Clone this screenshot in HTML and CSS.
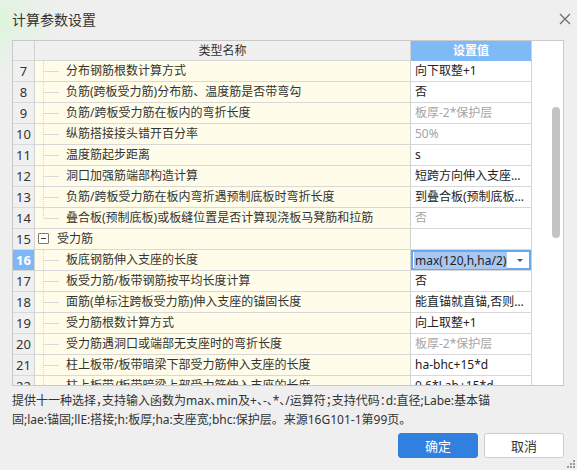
FILE: index.html
```html
<!DOCTYPE html>
<html lang="zh-CN">
<head>
<meta charset="utf-8">
<title>计算参数设置</title>
<link rel="stylesheet" href="styles.css">
</head>
<body>
<div class="dialog">
  <div class="titlebar">
    <span class="title">计算参数设置</span>
    <svg class="close" width="12" height="12" viewBox="0 0 12 12"><path d="M1 1 L11 11 M11 1 L1 11" stroke="#6a6a6a" stroke-width="1.2" fill="none"/></svg>
  </div>
  <div class="table">
    <div class="grid">
      <div class="row head">
        <div class="c-num"></div>
        <div class="c-name">类型名称</div>
        <div class="c-val">设置值</div>
      </div>
      <div class="row"><div class="c-num">7</div><div class="c-name"><i class="tree"></i><span class="txt">分布钢筋根数计算方式</span></div><div class="c-val">向下取整+1</div></div>
      <div class="row"><div class="c-num">8</div><div class="c-name"><i class="tree"></i><span class="txt">负筋(跨板受力筋)分布筋、温度筋是否带弯勾</span></div><div class="c-val">否</div></div>
      <div class="row"><div class="c-num">9</div><div class="c-name"><i class="tree"></i><span class="txt">负筋/跨板受力筋在板内的弯折长度</span></div><div class="c-val dim">板厚-2*保护层</div></div>
      <div class="row"><div class="c-num">10</div><div class="c-name"><i class="tree"></i><span class="txt">纵筋搭接接头错开百分率</span></div><div class="c-val dim">50%</div></div>
      <div class="row"><div class="c-num">11</div><div class="c-name"><i class="tree"></i><span class="txt">温度筋起步距离</span></div><div class="c-val">s</div></div>
      <div class="row"><div class="c-num">12</div><div class="c-name"><i class="tree"></i><span class="txt">洞口加强筋端部构造计算</span></div><div class="c-val">短跨方向伸入支座底筋长度</div></div>
      <div class="row"><div class="c-num">13</div><div class="c-name"><i class="tree"></i><span class="txt">负筋/跨板受力筋在板内弯折遇预制底板时弯折长度</span></div><div class="c-val">到叠合板(预制底板)顶</div></div>
      <div class="row"><div class="c-num">14</div><div class="c-name"><i class="tree last"></i><span class="txt">叠合板(预制底板)或板缝位置是否计算现浇板马凳筋和拉筋</span></div><div class="c-val dim">否</div></div>
      <div class="row"><div class="c-num">15</div><div class="c-name group"><i class="toggle"></i><span class="txt">受力筋</span></div><div class="c-val"></div></div>
      <div class="row sel"><div class="c-num">16</div><div class="c-name"><i class="tree"></i><span class="txt">板底钢筋伸入支座的长度</span></div><div class="c-val combo"><span class="hl">max(120,h,ha/2)</span><i class="arrow"></i></div></div>
      <div class="row"><div class="c-num">17</div><div class="c-name"><i class="tree"></i><span class="txt">板受力筋/板带钢筋按平均长度计算</span></div><div class="c-val">否</div></div>
      <div class="row"><div class="c-num">18</div><div class="c-name"><i class="tree"></i><span class="txt">面筋(单标注跨板受力筋)伸入支座的锚固长度</span></div><div class="c-val">能直锚就直锚,否则按公式计算</div></div>
      <div class="row"><div class="c-num">19</div><div class="c-name"><i class="tree"></i><span class="txt">受力筋根数计算方式</span></div><div class="c-val">向上取整+1</div></div>
      <div class="row"><div class="c-num">20</div><div class="c-name"><i class="tree"></i><span class="txt">受力筋遇洞口或端部无支座时的弯折长度</span></div><div class="c-val dim">板厚-2*保护层</div></div>
      <div class="row"><div class="c-num">21</div><div class="c-name"><i class="tree"></i><span class="txt">柱上板带/板带暗梁下部受力筋伸入支座的长度</span></div><div class="c-val">ha-bhc+15*d</div></div>
      <div class="row"><div class="c-num">22</div><div class="c-name"><i class="tree"></i><span class="txt">柱上板带/板带暗梁上部受力筋伸入支座的长度</span></div><div class="c-val">0.6*Lab+15*d</div></div>
    </div>
    <div class="filler">
      <div class="vscroll"><div class="thumb"></div></div>
    </div>
  </div>
  <div class="note">
    <div class="line first">提供十一种选择，支持输入函数为max、min及+、-、*、/运算符；支持代码：d:直径;Labe:基本锚</div>
    <div class="line">固;lae:锚固;llE:搭接;h:板厚;ha:支座宽;bhc:保护层。来源16G101-1第99页。</div>
  </div>
  <div class="buttons">
    <button class="btn primary">确定</button>
    <button class="btn">取消</button>
  </div>
  <div class="grip">
    <i></i><i></i><i></i><i></i><i></i><i></i>
  </div>
</div>
</body>
</html>
```

FILE: styles.css
```css
html, body {
  margin: 0;
  padding: 0;
}
body {
  width: 577px;
  height: 470px;
  overflow: hidden;
  background: #f0f0f0;
  font-family: "Noto Sans", "Noto Sans CJK SC", sans-serif;
  color: #333;
}
.dialog {
  position: relative;
  width: 577px;
  height: 470px;
  box-sizing: border-box;
  background:
    radial-gradient(ellipse 60px 60px at 0 20px, rgba(220, 245, 220, 0.9), rgba(240, 240, 240, 0) 100%),
    #efefef;
  display: flex;
  flex-direction: column;
  padding: 0 13px 0 12px;
}
.titlebar {
  height: 40px;
  display: flex;
  align-items: center;
  justify-content: space-between;
  padding-bottom: 1px;
  box-sizing: border-box;
}
.title {
  font-size: 14px;
  line-height: 16px;
  color: #333;
}
.close {
  margin-right: -7px;
  margin-top: -2px;
}
.table {
  height: 346px;
  border: 1px solid #c9c9c9;
  background: #fff;
  display: flex;
  box-sizing: border-box;
  overflow: hidden;
}
.grid {
  width: 519px;
  flex: none;
  display: flex;
  flex-direction: column;
}
.row {
  display: flex;
  height: 21px;
  flex: none;
  font-size: 12px;
  line-height: 20px;
}
.row.head {
  height: 20px;
  line-height: 19px;
}
.row > div {
  box-sizing: border-box;
  border-right: 1px solid #d2d2d2;
  border-bottom: 1px solid #d8d8d8;
  white-space: nowrap;
  overflow: hidden;
}
.c-num {
  width: 22px;
  background: #f0f0f0;
  text-align: center;
  font-size: 13px;
  color: #333;
}
.c-name {
  width: 376px;
  background: #fffde9;
  position: relative;
  padding-left: 31px;
}
.c-val {
  width: 121px;
  background: #fff;
  padding-left: 4px;
  padding-right: 4px;
  text-overflow: ellipsis;
  color: #222;
}
.c-val.dim {
  color: #a5a5a5;
}
.head .c-num {
  background: #f0f0f0;
}
.head .c-name {
  background: #f0f0f0;
  padding-left: 0;
  text-align: center;
  color: #333;
}
.head .c-val {
  background: #80baf6;
  color: #fff;
  font-weight: bold;
  text-align: center;
  padding: 0;
  border-bottom-color: #80baf6;
}
.tree {
  position: absolute;
  left: 8px;
  top: 0;
  bottom: -1px;
  width: 15px;
  border-left: 1px dotted #d4d4d4;
}
.tree::after {
  content: "";
  position: absolute;
  left: 0;
  top: 10px;
  width: 15px;
  border-top: 1px solid #dadada;
}
.tree.last {
  bottom: 10px;
}
.c-name.group {
  padding-left: 22px;
}
.toggle {
  position: absolute;
  left: 3px;
  top: 4px;
  width: 9px;
  height: 9px;
  border: 1px solid #7a7a7a;
  border-radius: 1px;
  background: #fff;
}
.toggle::after {
  content: "";
  position: absolute;
  left: 2px;
  top: 4px;
  width: 5px;
  border-top: 1px solid #444;
}
.sel .c-num {
  background: #7db8f6;
  color: #fff;
  font-weight: bold;
}
.c-val.combo {
  position: relative;
  box-shadow: inset 0 0 0 2px #66a7ee;
  overflow: visible;
  padding-left: 4px;
  display: flex;
  align-items: center;
}
.hl {
  background: #a8c8f2;
  line-height: 17px;
  color: #222;
  padding: 0 1px;
  margin-left: -1px;
}
.arrow {
  position: absolute;
  left: 106px;
  top: 9px;
  width: 0;
  height: 0;
  border-left: 3px solid transparent;
  border-right: 3px solid transparent;
  border-top: 3px solid #555;
}
.filler {
  flex: 1;
  display: flex;
  justify-content: flex-end;
  background: #fff;
}
.vscroll {
  width: 15px;
  padding-top: 66px;
  box-sizing: border-box;
}
.thumb {
  width: 8px;
  height: 131px;
  margin-left: 4px;
  background: #c4c4c4;
  border-radius: 4px;
}
.note {
  margin-top: 5px;
  font-size: 12px;
  line-height: 19px;
  color: #333;
}
.line {
  white-space: nowrap;
}
.line.first {
  font-feature-settings: "halt";
}
.buttons {
  margin-top: 4px;
  display: flex;
  justify-content: flex-end;
  gap: 6px;
}
.btn {
  width: 80px;
  height: 25px;
  box-sizing: border-box;
  border: 1px solid #cfcfcf;
  border-radius: 3px;
  background: #fff;
  font-family: "Noto Sans CJK SC", sans-serif;
  font-size: 13px;
  color: #333;
  padding: 0;
}
.btn.primary {
  background: #2f80df;
  border-color: #2f80df;
  color: #fff;
}
.grip {
  position: absolute;
  right: 2px;
  bottom: 2px;
  width: 8px;
  height: 8px;
  display: grid;
  grid-template-columns: repeat(3, 2px);
  grid-template-rows: repeat(3, 2px);
  gap: 1px;
}
.grip i {
  background: #9a9a9a;
}
.grip i:nth-child(1) { grid-area: 1 / 3; }
.grip i:nth-child(2) { grid-area: 2 / 2; }
.grip i:nth-child(3) { grid-area: 2 / 3; }
.grip i:nth-child(4) { grid-area: 3 / 1; }
.grip i:nth-child(5) { grid-area: 3 / 2; }
.grip i:nth-child(6) { grid-area: 3 / 3; }
```
